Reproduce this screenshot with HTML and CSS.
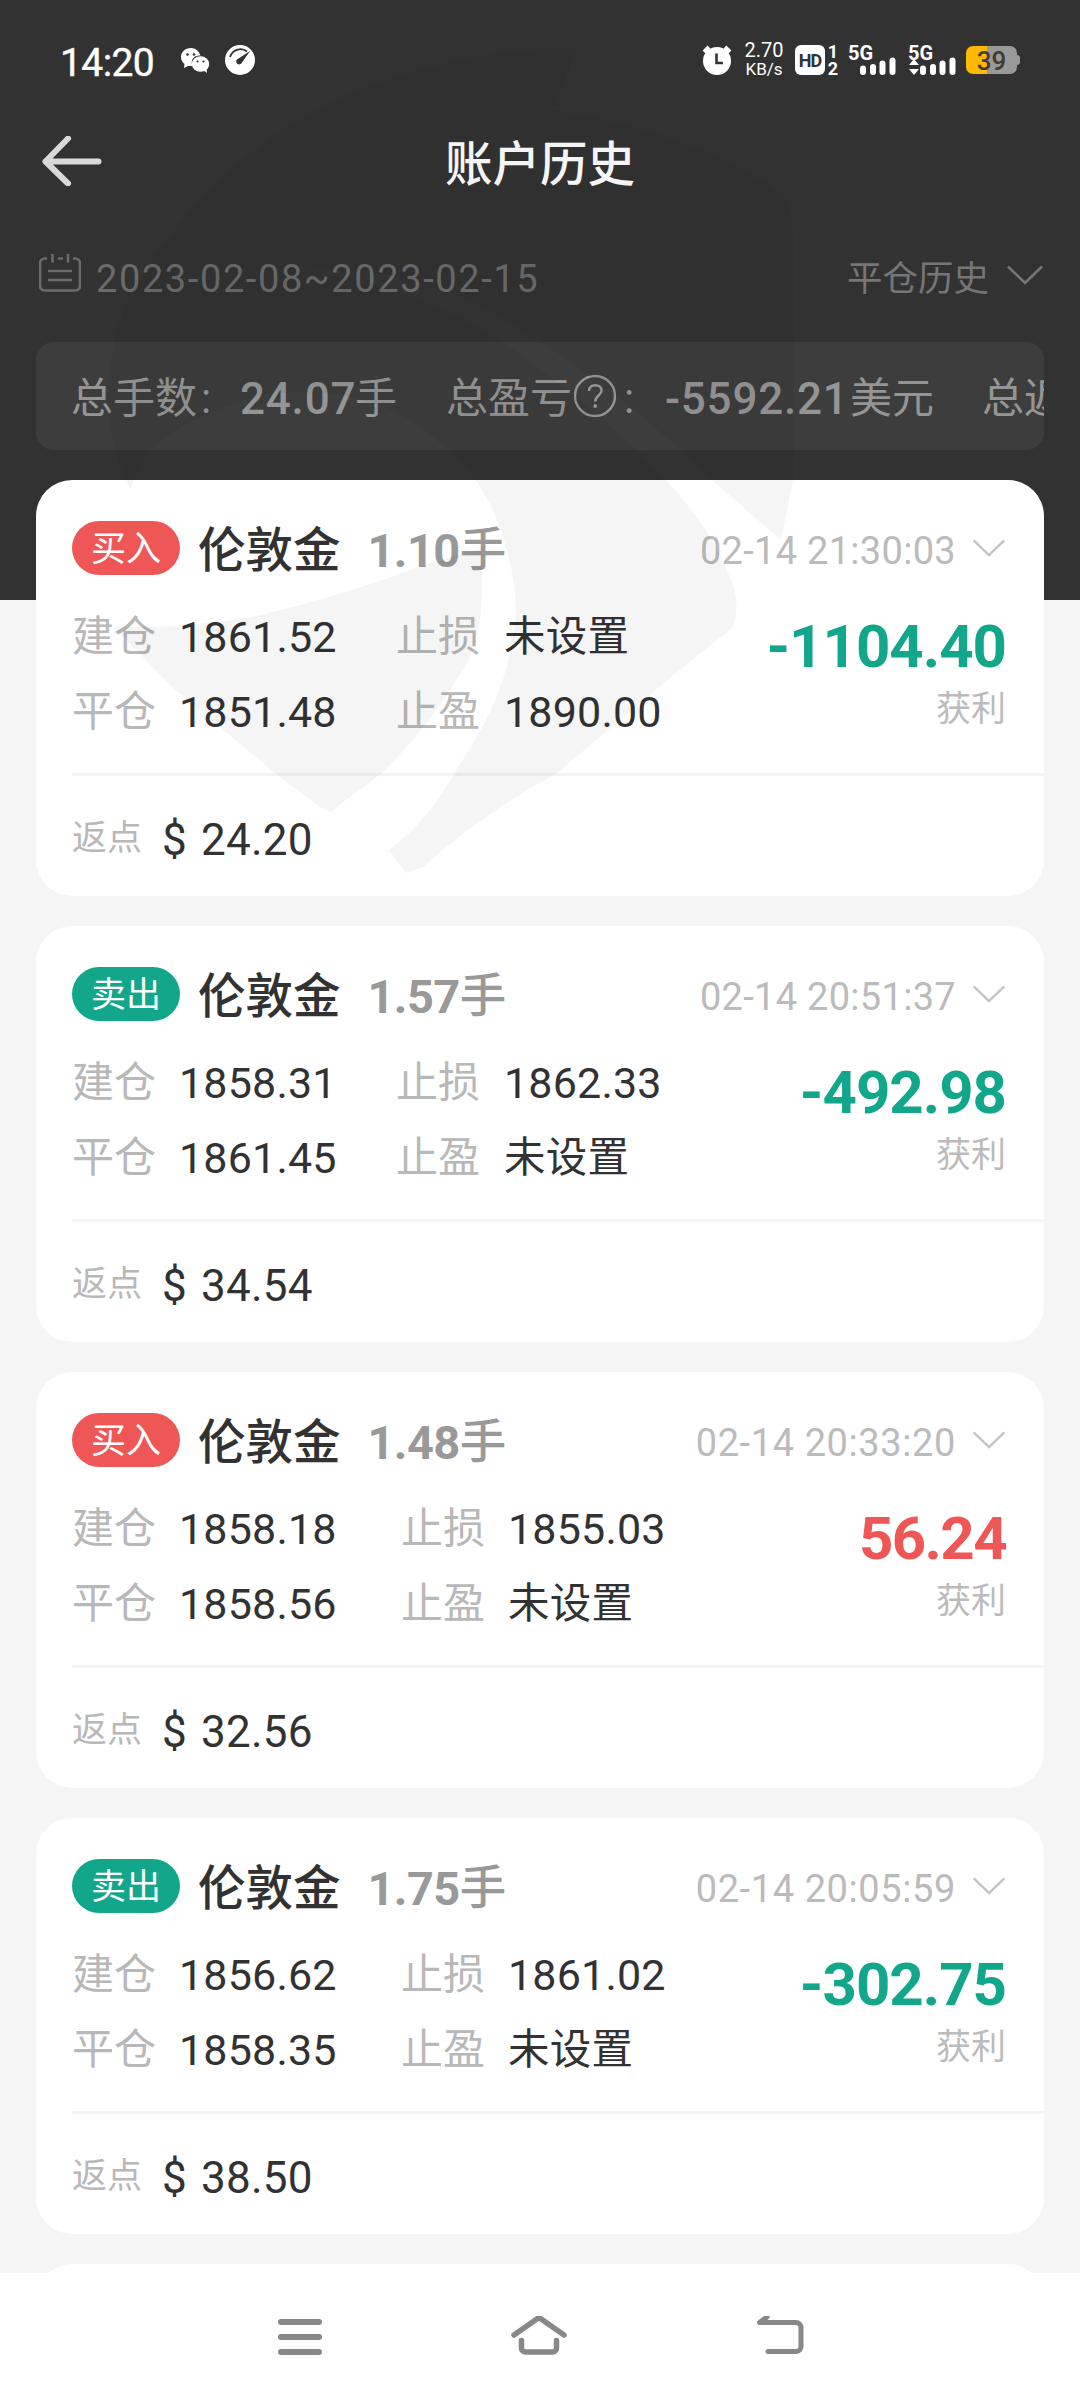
FILE: index.html
```html
<!DOCTYPE html>
<html lang="zh-CN">
<head>
<meta charset="utf-8">
<title>账户历史</title>
<link rel="stylesheet" href="styles.css">
</head>
<body>
<div class="screen">
  <svg width="0" height="0" class="defs">
    <symbol id="chevron" viewBox="0 0 36 20"><path d="M1 1.5 18 18 35 1.5" fill="none" stroke="currentColor" stroke-width="2.6"/></symbol>
    <symbol id="bars" viewBox="0 0 36 18"><path d="M3 11.500v3.500M13 10v5M22.500 6.500v8.500M32.500 3.500v11.500" fill="none" stroke="currentColor" stroke-width="6" stroke-linecap="round"/></symbol>
  </svg>

  <header class="top">
    <div class="status">
      <span class="clock">14:20</span>
      <svg class="wechat" viewBox="0 0 28 25" width="28" height="25"><path fill="#fff" d="M10 0C4 0 0 4 0 9c0 3 1.500 5.500 3.500 7L3 20l4-2h4.500C9 12 13 7 19.500 7.500 18 3 14.500 0 10 0Z"/><ellipse cx="19.500" cy="16" rx="8.700" ry="7.800" fill="#fff"/><path fill="#fff" d="m22 22 4 3-.5-5z"/><g fill="#323232"><circle cx="6.500" cy="6.500" r="1.300"/><circle cx="13" cy="6.500" r="1.300"/><circle cx="16.500" cy="13.500" r="1.100"/><circle cx="22.500" cy="13.500" r="1.100"/></g></svg>
      <svg class="gauge" viewBox="0 0 30 30" width="30" height="30"><circle cx="15" cy="15" r="15" fill="#fff"/><path d="M5 12C8 3.500 17 2.500 22 6.500" fill="none" stroke="#323232" stroke-width="1.800"/><path d="M25 6 17 17.500a3 3 0 1 1-3.500-4Z" fill="#323232"/></svg>
      <div class="status-right">
        <svg class="alarm" viewBox="0 0 30 30" width="30" height="30"><circle cx="15" cy="16" r="14" fill="#fff"/><path d="m2 7 5-5M28 7l-5-5" stroke="#fff" stroke-width="4"/><path d="M14.500 8.500V18H21" fill="none" stroke="#323232" stroke-width="2.600"/></svg>
        <div class="speed"><span>2.70</span><span>KB/s</span></div>
        <span class="hd">HD</span>
        <div class="sims"><span>1</span><span>2</span></div>
        <div class="signal s1"><span>5G</span><svg width="36" height="18"><use href="#bars"/></svg></div>
        <div class="signal s2"><span>5G</span><svg class="updown" width="10" height="16" viewBox="0 0 10 16"><path d="m5 0 5 6H0zM5 16l5-6H0z" fill="#fff"/></svg><svg width="36" height="18"><use href="#bars"/></svg></div>
        <div class="battery"><span>39</span></div>
      </div>
    </div>
    <div class="titlebar">
      <svg class="back" width="60" height="50" viewBox="0 0 60 50"><path d="M25 2 2.500 25 25 47M2.500 25h53" transform="translate(1 .5)" fill="none" stroke="#d9d9d9" stroke-width="6" stroke-linecap="round" stroke-linejoin="round"/></svg>
      <h1>账户历史</h1>
    </div>
    <div class="filters">
      <svg width="42" height="38" viewBox="0 0 42 38"><path d="M8 4.500H6a5 5 0 0 0-5 5V32a4.500 4.500 0 0 0 4.500 4.500h31A4.500 4.500 0 0 0 41 32V9.500a5 5 0 0 0-5-5h-2M13.500 0v8.500M29 0v8.500M19 4.500h5M9 17h24M9 26h24" fill="none" stroke="#6b6b6b" stroke-width="2.600"/></svg>
      <span class="range">2023-02-08~2023-02-15</span>
      <span class="kind">平仓历史</span>
      <svg class="kind-arrow" width="36" height="20"><use href="#chevron"/></svg>
    </div>
    <div class="totals">
      <span class="t-label lots">总手数<i>:</i></span><b>24.07</b><span>手</span>
      <span class="t-label profit">总盈亏</span>
      <svg class="help" width="42" height="44" viewBox="0 0 42 44"><circle cx="21" cy="22" r="20" fill="none" stroke="#959595" stroke-width="2.400"/><path d="M15 17c0-8 12.500-7.500 12.500-.5 0 5-6.300 5-6.300 11" fill="none" stroke="#959595" stroke-width="2.500"/><circle cx="21.200" cy="32" r="1.900" fill="#959595"/></svg>
      <i class="colon">:</i><b class="sum">-5592.21</b><span>美元</span>
      <span class="t-label rebate-total">总返点</span>
    </div>
  </header>

  <main class="list">
    <article class="card">
      <div class="head"><span class="badge buy">买入</span><span class="name">伦敦金</span><span class="lot">1.10<em>手</em></span><time>02-14 21:30:03</time><svg class="arrow" width="34" height="18"><use href="#chevron"/></svg></div>
      <div class="body">
        <dl class="prices"><dt>建仓</dt><dd>1861.52</dd><dt>止损</dt><dd class="unset">未设置</dd><dt>平仓</dt><dd>1851.48</dd><dt>止盈</dt><dd>1890.00</dd></dl>
        <div class="result"><strong class="down">-1104.40</strong><span>获利</span></div>
      </div>
      <div class="foot"><span>返点</span><b>$ 24.20</b></div>
    </article>
    <article class="card">
      <div class="head"><span class="badge sell">卖出</span><span class="name">伦敦金</span><span class="lot">1.57<em>手</em></span><time>02-14 20:51:37</time><svg class="arrow" width="34" height="18"><use href="#chevron"/></svg></div>
      <div class="body">
        <dl class="prices"><dt>建仓</dt><dd>1858.31</dd><dt>止损</dt><dd>1862.33</dd><dt>平仓</dt><dd>1861.45</dd><dt>止盈</dt><dd class="unset">未设置</dd></dl>
        <div class="result"><strong class="down">-492.98</strong><span>获利</span></div>
      </div>
      <div class="foot"><span>返点</span><b>$ 34.54</b></div>
    </article>
    <article class="card">
      <div class="head"><span class="badge buy">买入</span><span class="name">伦敦金</span><span class="lot">1.48<em>手</em></span><time class="loose">02-14 20:33:20</time><svg class="arrow" width="34" height="18"><use href="#chevron"/></svg></div>
      <div class="body">
        <dl class="prices wide"><dt>建仓</dt><dd>1858.18</dd><dt>止损</dt><dd>1855.03</dd><dt>平仓</dt><dd>1858.56</dd><dt>止盈</dt><dd class="unset">未设置</dd></dl>
        <div class="result"><strong class="up">56.24</strong><span>获利</span></div>
      </div>
      <div class="foot"><span>返点</span><b>$ 32.56</b></div>
    </article>
    <article class="card">
      <div class="head"><span class="badge sell">卖出</span><span class="name">伦敦金</span><span class="lot">1.75<em>手</em></span><time class="loose">02-14 20:05:59</time><svg class="arrow" width="34" height="18"><use href="#chevron"/></svg></div>
      <div class="body">
        <dl class="prices wide"><dt>建仓</dt><dd>1856.62</dd><dt>止损</dt><dd>1861.02</dd><dt>平仓</dt><dd>1858.35</dd><dt>止盈</dt><dd class="unset">未设置</dd></dl>
        <div class="result"><strong class="down">-302.75</strong><span>获利</span></div>
      </div>
      <div class="foot"><span>返点</span><b>$ 38.50</b></div>
    </article>
    <article class="card"></article>
  </main>

  <nav class="nav">
    <svg width="46" height="42" viewBox="0 0 46 42"><path d="M4 6h38M4 21h38M4 36h38" stroke="#888" stroke-width="6" stroke-linecap="round"/></svg>
    <svg width="60" height="42" viewBox="0 0 60 42"><path d="M5 19.500 30 2l25 17.500M12.500 25v7.500a4 4 0 0 0 4 4h27a4 4 0 0 0 4-4V25" transform="translate(0 -.5)" fill="none" stroke="#888" stroke-width="5.500" stroke-linecap="round" stroke-linejoin="round"/></svg>
    <svg width="50" height="42" viewBox="0 0 50 42"><path d="M12 1 4.500 6.500H41a5 5 0 0 1 5 5v19a5 5 0 0 1-5 5H13" fill="none" stroke="#888" stroke-width="5" stroke-linecap="round" stroke-linejoin="round"/></svg>
  </nav>

  <svg class="watermark" width="1080" height="900" viewBox="0 0 1080 900">
    <path d="M114 627Q200 628 262 615 330 598 389 578 430 562 482 548V593Q480 650 458 677 430 725 382 773L330 812 320 807 275 773 172 687Z"/>
    <path d="M131 490Q140 430 260 395 380 380 447 450 486 480 504 540 516 580 516 610 512 690 458 767 430 820 389 850L406 873 423 867Q480 815 557 773L671 677 733 627Q742 600 728 573 712 530 666 480 600 410 500 340 400 280 300 270 160 290 114 347 96 420 131 490Z"/>
    <path d="M114 347Q120 290 200 200C300 90 450 48 578 48L551 110Q690 130 785 196 793 215 793 237V480L781 540 712 480Q600 370 470 300 280 220 114 347Z"/>
  </svg>
</div>
</body>
</html>
```
FILE: styles.css
```css
* { box-sizing: border-box; }
body { margin: 0; font-family: Roboto, "Noto Sans CJK SC", sans-serif; line-height: 1; }
i, em { font-style: normal; }
.screen { position: relative; display: flex; flex-direction: column; width: 1080px; height: 2400px; overflow: hidden; background: linear-gradient(#323232 600px, #f5f5f5 600px); }
.defs { position: absolute; }
.watermark { position: absolute; left: 0; top: 0; fill: #000; opacity: .036; pointer-events: none; }

.top { flex: none; height: 480px; color: #fff; }
.status { display: flex; align-items: center; height: 120px; padding: 0 60px; }
.clock { width: 121px; font-size: 39px; font-weight: 400; -webkit-text-stroke: .4px #fff; letter-spacing: -.6px; padding-top: 6px; }
.gauge { margin-left: 16px; }
.status-right { display: flex; align-items: center; margin-left: 447px; height: 30px; }
.speed { display: flex; flex-direction: column; width: 38px; margin-left: 13px; font-size: 20px; line-height: 17px; align-items: center; white-space: nowrap; }
.speed span + span { margin-top: 1px; font-size: 17px; line-height: 18px; }
.hd { width: 30px; height: 30px; margin-left: 12px; border-radius: 6px; background: #fff; color: #323232; font-size: 18px; font-weight: 700; line-height: 31px; text-align: center; letter-spacing: -1px; }
.sims { display: flex; flex-direction: column; width: 12px; margin-left: 2px; font-size: 18px; font-weight: 700; line-height: 17px; text-align: center; }
.signal { position: relative; width: 48px; height: 30px; font-size: 20px; font-weight: 700; line-height: 16px; }
.signal svg { position: absolute; right: 0; bottom: 0; }
.signal .updown { left: 1px; bottom: 0; }
.s1 { margin-left: 9px; }
.s2 { margin-left: 12px; }
.battery { position: relative; width: 51px; height: 28px; margin-left: 10px; border-radius: 7px; background: linear-gradient(90deg, #ffb900 21px, #999 21px); color: #443a2c; font-size: 26px; font-weight: 500; line-height: 30px; text-align: center; }
.battery::after { content: ""; position: absolute; left: 51px; top: 9px; width: 3px; height: 10px; border-radius: 0 3px 3px 0; background: #999; }
.titlebar { display: grid; grid-template-columns: 1fr auto 1fr; align-items: center; height: 82px; padding: 0 42px; }
h1 { margin: 9px 0 0; font-size: 47.500px; font-weight: 500; line-height: 1; }
.filters { display: flex; align-items: center; height: 140px; padding: 8px 37px 0 39px; color: #6b6b6b; }
.filters > svg:first-child { margin-bottom: 6px; }
.range { margin-left: 15px; padding-top: 5px; font-size: 38px; letter-spacing: 1.6px; }
.kind { margin-left: auto; padding-top: 7px; font-size: 35.500px; color: #767676; }
.kind-arrow { margin-left: 18px; margin-bottom: 3px; color: #767676; }
.totals { display: flex; align-items: center; width: 1008px; height: 108px; margin-left: 36px; padding-left: 35px; overflow: hidden; white-space: nowrap; border-radius: 18px; background: #3d3d3d; color: #959595; font-size: 42px; }
.totals > * { flex: none; }
.totals span, .totals .colon { padding-top: 6px; }
.totals b { padding-top: 5px; font-weight: 500; font-size: 44px; letter-spacing: .8px; }
.totals i { margin-left: 4px; }
.lots { width: 169px; }
.lots + b { width: 115px; }
.profit { margin-left: 49px; }
.help { margin-left: 2px; }
.totals .colon { width: 41px; margin-left: 8px; }
.sum { width: 185px; }
.rebate-total { margin-left: 48px; }

.list { flex: none; display: flex; flex-direction: column; gap: 30px; height: 1793px; padding: 0 36px; overflow: hidden; }
.card { flex: none; height: 416px; padding: 41px 0 0 36px; border-radius: 36px; background: #fff; }
.head { display: flex; align-items: center; height: 54px; padding-right: 38px; }
.badge { width: 108px; height: 54px; padding-top: 2px; border-radius: 27px; color: #fff; font-size: 35px; line-height: 54px; text-align: center; }
.buy { background: #ef5656; }
.sell { background: #12a78b; }
.name { margin-left: 18px; padding-top: 8px; color: #323232; font-size: 47.500px; font-weight: 500; }
.lot { display: flex; align-items: center; margin-left: 27px; padding-top: 4px; color: #999; font-size: 47px; font-weight: 700; letter-spacing: -.6px; }
.lot em { font-size: 46.500px; font-weight: 500; }
time { margin-left: auto; padding-top: 6px; color: #bbb; font-size: 38px; letter-spacing: .3px; }
.loose { letter-spacing: .6px; }
.arrow { margin-left: 16px; margin-bottom: 1px; color: #c4c4c4; }
.body { display: flex; justify-content: space-between; height: 198px; padding: 24px 38px 0 0; }
.prices { display: grid; grid-template-columns: 107px 217px 108px 200px; grid-auto-rows: 75px; align-items: center; margin: 0; font-size: 42px; }
.wide { grid-template-columns: 107px 222px 107px 200px; }
dt { color: #b8b8b8; }
dd { margin: 0; padding-top: 1px; color: #323232; font-size: 43px; letter-spacing: .2px; }
.unset { padding-top: 1px; font-size: 41.500px; }
.result { display: flex; flex-direction: column; align-items: flex-end; padding-top: 18px; color: #bbb; font-size: 35px; }
strong { font-size: 60px; font-weight: 700; letter-spacing: -1px; }
.result span { margin-top: 15px; }
.up { color: #ef5656; letter-spacing: -1.6px; }
.down { color: #12a78b; }
.foot { display: flex; align-items: center; height: 127px; border-top: 3px solid #f4f4f4; color: #b8b8b8; font-size: 35px; }
.foot span { padding-top: 1px; }
.foot b { margin-left: 20px; padding-top: 3px; color: #323232; font-size: 44px; font-weight: 400; word-spacing: 3px; letter-spacing: .2px; }

.nav { flex: none; display: flex; justify-content: center; gap: 186px; height: 127px; padding: 43px 0 0 2px; background: #fff; }
```
